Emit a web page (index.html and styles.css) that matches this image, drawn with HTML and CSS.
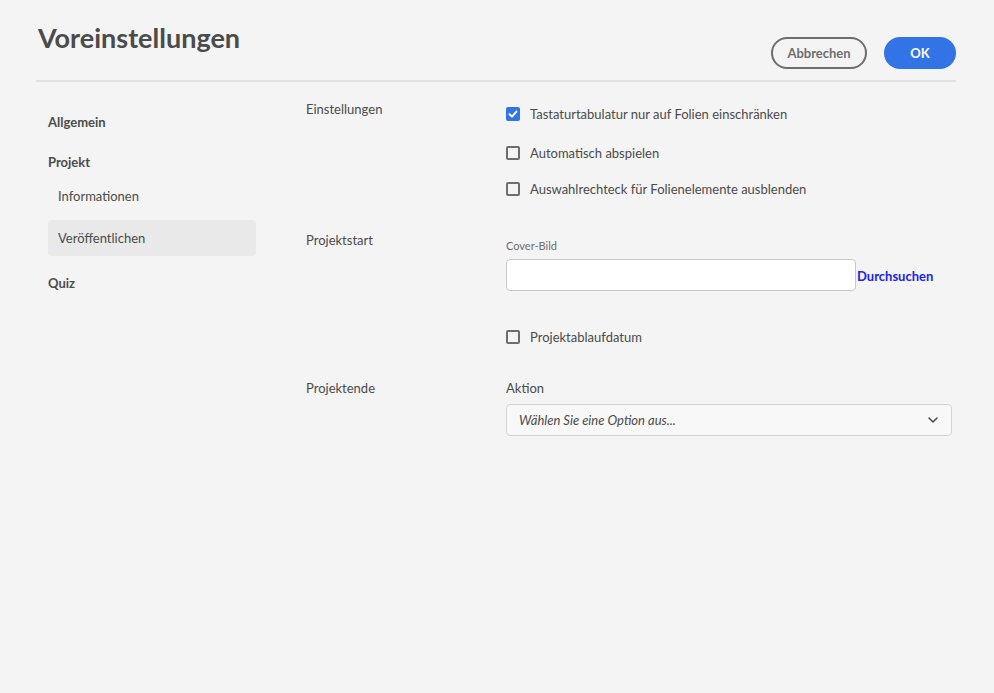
FILE: index.html
```html
<!DOCTYPE html>
<html lang="de">
<head>
<meta charset="utf-8">
<title>Voreinstellungen</title>
<link rel="stylesheet" href="styles.css">
</head>
<body>
<div class="dialog">
  <header class="header">
    <h1 class="title">Voreinstellungen</h1>
    <div class="actions">
      <button class="btn btn-secondary">Abbrechen</button>
      <button class="btn btn-primary">OK</button>
    </div>
  </header>
  <div class="divider"></div>
  <div class="body">
    <nav class="sidebar">
      <div class="nav-head nav-allgemein">Allgemein</div>
      <div class="nav-head nav-projekt">Projekt</div>
      <div class="nav-sub nav-info">Informationen</div>
      <div class="nav-sub nav-pub selected">Veröffentlichen</div>
      <div class="nav-head nav-quiz">Quiz</div>
    </nav>
    <main class="main">
      <section class="section sec-settings">
        <div class="sec-label">Einstellungen</div>
        <div class="sec-controls">
          <label class="check row1"><span class="box checked"><svg viewBox="0 0 14 14" width="14" height="14"><path d="M3.6 7.2 L6 9.6 L10.4 4.6" fill="none" stroke="#fff" stroke-width="2" stroke-linecap="round" stroke-linejoin="round"/></svg></span>Tastaturtabulatur nur auf Folien einschränken</label>
          <label class="check row2"><span class="box"></span>Automatisch abspielen</label>
          <label class="check row3"><span class="box"></span>Auswahlrechteck für Folienelemente ausblenden</label>
        </div>
      </section>
      <section class="section sec-start">
        <div class="sec-label">Projektstart</div>
        <div class="sec-controls">
          <div class="small-label">Cover-Bild</div>
          <div class="file-row">
            <div class="text-input"></div>
            <a class="browse">Durchsuchen</a>
          </div>
          <label class="check row-date"><span class="box"></span>Projektablaufdatum</label>
        </div>
      </section>
      <section class="section sec-end">
        <div class="sec-label">Projektende</div>
        <div class="sec-controls">
          <div class="field-label">Aktion</div>
          <div class="select">
            <span class="placeholder">Wählen Sie eine Option aus...</span>
            <svg class="chev" viewBox="0 0 10 6" width="10" height="6"><path d="M1 1 L5 5 L9 1" fill="none" stroke="#4b4b4b" stroke-width="1.6" stroke-linecap="round" stroke-linejoin="round"/></svg>
          </div>
        </div>
      </section>
    </main>
  </div>
</div>
</body>
</html>
```
FILE: styles.css
```css
* { box-sizing: border-box; }
html, body { margin: 0; padding: 0; }
body {
  background: #f4f4f4;
  color: #4b4b4b;
  font-family: "Lato", "Noto Sans", sans-serif;
  font-size: 13px;
  width: 994px;
  height: 693px;
  overflow: hidden;
}
.header {
  display: flex;
  justify-content: space-between;
  align-items: flex-start;
  height: 80px;
  padding: 0 38px 0 38px;
}
.title {
  margin: 20px 0 0 0;
  font-size: 27px;
  line-height: 36px;
  font-weight: 700;
  color: #4b4b4b;
}
.actions {
  display: flex;
  gap: 17px;
  margin-top: 37px;
}
.btn {
  height: 32px;
  border-radius: 16px;
  font-family: inherit;
  font-size: 13px;
  font-weight: 700;
  padding: 0;
  cursor: pointer;
}
.btn-secondary {
  width: 96px;
  background: transparent;
  border: 2px solid #6e6e6e;
  color: #6e6e6e;
}
.btn-primary {
  width: 72px;
  background: #3274e6;
  border: none;
  color: #fff;
}
.divider {
  margin: 0 38px 0 36px;
  border-top: 2px solid #e1e1e1;
}
.body {
  display: flex;
  gap: 50px;
  padding-left: 48px;
}
.sidebar {
  width: 208px;
  display: flex;
  flex-direction: column;
}
.nav-head, .nav-sub {
  height: 36px;
  line-height: 36px;
  border-radius: 4px;
}
.nav-head { font-weight: 700; }
.nav-sub { padding-left: 10px; }
.nav-allgemein { margin-top: 22px; }
.nav-projekt { margin-top: 4px; }
.nav-info { margin-top: -2px; }
.nav-pub { margin-top: 6px; }
.nav-quiz { margin-top: 9px; }
.selected { background: #e9e9e9; }

.main { width: 650px; }
.section {
  display: grid;
  grid-template-columns: 200px 446px;
}
.sec-label { line-height: 18px; }
.sec-settings .sec-label { margin-top: 18px; }
.sec-controls { display: flex; flex-direction: column; }
.check {
  display: flex;
  align-items: center;
  gap: 10px;
  line-height: 20px;
  height: 20px;
}
.box {
  width: 14px;
  height: 14px;
  border: 2px solid #6e6e6e;
  border-radius: 2px;
  display: inline-flex;
  flex: none;
}
.box.checked {
  background: #3274e6;
  border-color: #3274e6;
  align-items: center;
  justify-content: center;
}
.box.checked svg { margin: -2px; flex: none; }
.row1 { margin-top: 22px; }
.row2 { margin-top: 19px; }
.row3 { margin-top: 16px; }

.sec-start .sec-label { margin-top: 32px; }
.small-label {
  font-size: 11px;
  line-height: 14px;
  margin-top: 40px;
  color: #6e6e6e;
}
.file-row {
  display: flex;
  align-items: center;
  margin-top: 6px;
}
.text-input {
  width: 350px;
  height: 32px;
  background: #fff;
  border: 1px solid #c8c8c8;
  border-radius: 4px;
}
.browse {
  font-weight: 700;
  color: #2222ee;
  margin-left: 1px;
  margin-top: 1px;
}
.row-date { margin-top: 36px; }

.sec-end .sec-label { margin-top: 32px; }
.field-label {
  margin-top: 33px;
  line-height: 16px;
}
.select {
  margin-top: 8px;
  height: 32px;
  width: 446px;
  background: #f8f8f8;
  border: 1px solid #d3d3d3;
  border-radius: 4px;
  display: flex;
  align-items: center;
  justify-content: space-between;
  padding: 0 13px 0 12px;
}
.placeholder { font-style: italic; }
.chev { flex: none; }
```
